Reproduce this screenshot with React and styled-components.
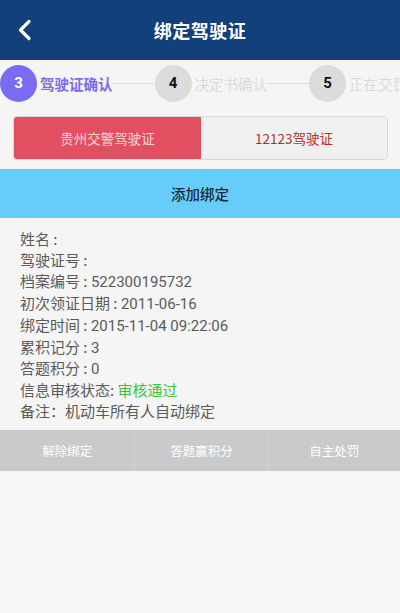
import React from "react";
import styled, { createGlobalStyle } from "styled-components";

const Global = createGlobalStyle`
  html, body { margin: 0; padding: 0; background: #f7f7f7; }
  body { font-family: "Noto Sans CJK SC", "Noto Sans", sans-serif; }
  #root { width: 400px; min-height: 613px; background: #f7f7f7; }
`;

const Page = styled.div`
  width: 400px;
  min-height: 613px;
  display: flex;
  flex-direction: column;
  background: #f7f7f7;
`;

const Header = styled.header`
  height: 60px;
  background: #12407a;
  display: flex;
  align-items: center;
  justify-content: center;
  position: relative;
`;

const Back = styled.button`
  position: absolute;
  left: 14px;
  top: 18px;
  width: 24px;
  height: 24px;
  padding: 0;
  border: 0;
  background: none;
  display: flex;
`;

const Title = styled.h1`
  margin: 0;
  color: #fff;
  font-size: 18px;
  font-weight: 700;
  letter-spacing: 0.5px;
`;

const Steps = styled.div`
  height: 46px;
  background: #f5f5f5;
  display: flex;
  align-items: center;
  padding-left: 0;
  overflow: hidden;
  white-space: nowrap;
`;

const Circle = styled.div`
  flex: none;
  width: 37px;
  height: 37px;
  border-radius: 50%;
  background: ${(p) => (p.$active ? "#7a6cf0" : "#dcdcdc")};
  color: ${(p) => (p.$active ? "#fff" : "#111")};
  font-family: "Roboto", "Noto Sans", sans-serif;
  font-size: 15px;
  font-weight: 700;
  display: flex;
  align-items: center;
  justify-content: center;
`;

const StepLabel = styled.span`
  flex: none;
  font-size: 14.5px;
  font-weight: ${(p) => (p.$active ? 700 : 400)};
  color: ${(p) => (p.$active ? "#7a6cf0" : "#dadada")};
  margin-left: 3px;
`;

const Line = styled.div`
  flex: none;
  width: ${(p) => p.$w}px;
  height: 1px;
  background: #dcdcdc;
`;

const TabsWrap = styled.div`
  padding: 10px 12px 9px 13px;
  background: #f5f5f5;
`;

const Tabs = styled.div`
  display: flex;
  height: 42px;
  border-radius: 4px;
  border: 1px solid #d8d8d8;
  overflow: hidden;
`;

const Tab = styled.div`
  flex: ${(p) => (p.$active ? "0 0 187px" : "1")};
  display: flex;
  align-items: center;
  justify-content: center;
  font-size: 13.5px;
  background: ${(p) => (p.$active ? "#e24f60" : "#f0f0f0")};
  color: ${(p) => (p.$active ? "#f6d6da" : "#b8302c")};
`;

const AddBar = styled.div`
  height: 49px;
  background: #66cdfb;
  display: flex;
  align-items: center;
  justify-content: center;
  font-size: 14.5px;
  font-weight: 500;
  color: #1d2a33;
`;

const Info = styled.div`
  background: #f5f5f5;
  padding: 11px 20px 12px 20px;
  display: flex;
  flex-direction: column;
  height: 212px;
  box-sizing: border-box;
`;

const Row = styled.div`
  font-size: 15px;
  line-height: 20.9px;
  color: #5a5a5a;
  white-space: nowrap;
`;

const Num = styled.span`
  font-family: "Roboto", "Noto Sans", sans-serif;
`;

const Ok = styled.span`
  color: #3dc23d;
`;

const Actions = styled.div`
  height: 41px;
  background: #c9cacc;
  display: flex;
`;

const Action = styled.div`
  flex: ${(p) => p.$w};
  display: flex;
  align-items: center;
  justify-content: center;
  font-size: 12.5px;
  color: #fff;
  border-left: ${(p) => (p.$first ? "0" : "1px solid #d3d4d6")};
`;

const Rest = styled.div`
  flex: 1;
  background: #f7f7f7;
`;

export default function App() {
  return (
    <Page>
      <Global />
      <Header>
        <Back aria-label="返回">
          <svg width="24" height="24" viewBox="0 0 24 24">
            <path d="M15 3.5 L6.5 12 L15 20.5" fill="none" stroke="#fff" strokeWidth="3.2" strokeLinecap="round" strokeLinejoin="round" />
          </svg>
        </Back>
        <Title>绑定驾驶证</Title>
      </Header>
      <Steps>
        <Circle $active>3</Circle>
        <StepLabel $active>驾驶证确认</StepLabel>
        <Line $w={42} />
        <Circle>4</Circle>
        <StepLabel>决定书确认</StepLabel>
        <Line $w={42} />
        <Circle>5</Circle>
        <StepLabel>正在交罚款</StepLabel>
      </Steps>
      <TabsWrap>
        <Tabs>
          <Tab $active>贵州交警驾驶证</Tab>
          <Tab>12123驾驶证</Tab>
        </Tabs>
      </TabsWrap>
      <AddBar>添加绑定</AddBar>
      <Info>
        <Row>姓名 : </Row>
        <Row>驾驶证号 : </Row>
        <Row>档案编号 : <Num>522300195732</Num></Row>
        <Row>初次领证日期 : <Num>2011-06-16</Num></Row>
        <Row>绑定时间 : <Num>2015-11-04 09:22:06</Num></Row>
        <Row>累积记分 : <Num>3</Num></Row>
        <Row>答题积分 : <Num>0</Num></Row>
        <Row>信息审核状态: <Ok>审核通过</Ok></Row>
        <Row>备注：机动车所有人自动绑定</Row>
      </Info>
      <Actions>
        <Action $first $w={135}>解除绑定</Action>
        <Action $w={133}>答题赢积分</Action>
        <Action $w={132}>自主处罚</Action>
      </Actions>
      <Rest />
    </Page>
  );
}
